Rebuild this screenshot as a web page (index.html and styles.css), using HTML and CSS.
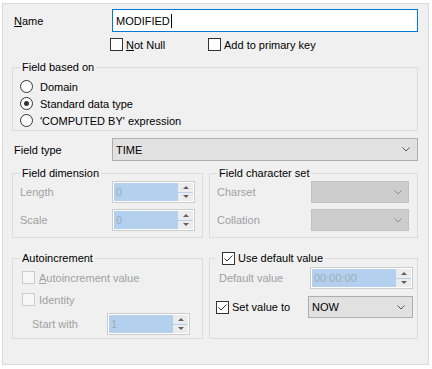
FILE: index.html
```html
<!DOCTYPE html>
<html lang="en">
<head>
  <meta charset="UTF-8">
  <title>Field</title>
  <link rel="stylesheet" href="styles.css">
</head>
<body>
  <div class="panel">
    <div class="name_row">
      <label class="lbl"><u>N</u>ame</label>
      <div class="edit">MODIFIED<span class="caret"></span></div>
    </div>

    <div class="check_row">
      <span class="chk first"><span class="box"></span><span><u>N</u>ot Null</span></span>
      <span class="chk"><span class="box"></span><span>Add to primary key</span></span>
    </div>

    <fieldset class="group based">
      <legend>Field based on</legend>
      <div class="radio"><span class="circle"></span>Domain</div>
      <div class="radio"><span class="circle on"><span class="dot"></span></span>Standard data type</div>
      <div class="radio"><span class="circle"></span>'COMPUTED BY' expression</div>
    </fieldset>

    <div class="type_row">
      <label class="lbl">Field type</label>
      <div class="combo wide">TIME
        <svg class="chev" width="8" height="5" viewBox="0 0 8 5"><path d="M0.5 0.5 L4 4 L7.5 0.5" fill="none" stroke="#555" stroke-width="1"/></svg>
      </div>
    </div>

    <div class="pair dims">
      <fieldset class="group dim">
        <legend>Field dimension</legend>
        <div class="frow">
          <span class="lbl_off w92">Length</span>
          <div class="spin w83"><span class="val">0</span><span class="btns"><span class="up"></span><span class="dn"></span></span></div>
        </div>
        <div class="frow">
          <span class="lbl_off w92">Scale</span>
          <div class="spin w83"><span class="val">0</span><span class="btns"><span class="up"></span><span class="dn"></span></span></div>
        </div>
      </fieldset>
      <fieldset class="group charset">
        <legend>Field character set</legend>
        <div class="frow">
          <span class="lbl_off w94">Charset</span>
          <div class="combo off w98">
            <svg class="chev" width="8" height="5" viewBox="0 0 8 5"><path d="M0.5 0.5 L4 4 L7.5 0.5" fill="none" stroke="#8c8c8c" stroke-width="1"/></svg>
          </div>
        </div>
        <div class="frow">
          <span class="lbl_off w94">Collation</span>
          <div class="combo off w98">
            <svg class="chev" width="8" height="5" viewBox="0 0 8 5"><path d="M0.5 0.5 L4 4 L7.5 0.5" fill="none" stroke="#8c8c8c" stroke-width="1"/></svg>
          </div>
        </div>
      </fieldset>
    </div>

    <div class="pair bottom">
      <fieldset class="group auto">
        <legend>Autoincrement</legend>
        <div class="crow"><span class="box off"></span><span class="txt_off"><u>A</u>utoincrement value</span></div>
        <div class="crow second"><span class="box off"></span><span class="txt_off">Identity</span></div>
        <div class="frow start">
          <span class="lbl_off w87">Start with</span>
          <div class="spin w83"><span class="val">1</span><span class="btns"><span class="up"></span><span class="dn"></span></span></div>
        </div>
      </fieldset>
      <fieldset class="group defval">
        <legend>
          <span class="chk"><span class="box"><svg width="11" height="11" viewBox="0 0 11 11"><path d="M1.5 5.5 L4 8 L9.5 2.5" fill="none" stroke="#333" stroke-width="1"/></svg></span><span>Use default value</span></span>
        </legend>
        <div class="frow">
          <span class="lbl_off w94 ind">Default value</span>
          <div class="spin w103"><span class="val">00:00:00</span><span class="btns"><span class="up"></span><span class="dn"></span></span></div>
        </div>
        <div class="frow setrow">
          <span class="chk w92"><span class="box"><svg width="11" height="11" viewBox="0 0 11 11"><path d="M1.5 5.5 L4 8 L9.5 2.5" fill="none" stroke="#333" stroke-width="1"/></svg></span><span>Set value to</span></span>
          <div class="combo w105">NOW
            <svg class="chev" width="8" height="5" viewBox="0 0 8 5"><path d="M0.5 0.5 L4 4 L7.5 0.5" fill="none" stroke="#555" stroke-width="1"/></svg>
          </div>
        </div>
      </fieldset>
    </div>
  </div>
</body>
</html>
```

FILE: styles.css
```css
* {
  box-sizing: border-box;
}

body {
  margin: 0;
  background: #fff;
  color: #000;
  font-family: "Liberation Sans", Arial, sans-serif;
  font-size: 11px;
  line-height: 14px;
}

.panel {
  width: 427px;
  height: 362px;
  margin: 3px 0 0 2px;
  padding: 5px 10px 0 9px;
  border: 1px solid #d9d9d9;
  background: #f0f0f0;
}

u {
  text-decoration: underline;
  text-underline-offset: 1px;
}

/* name */
.name_row,
.type_row {
  display: flex;
  align-items: center;
  height: 23px;
}

.type_row {
  margin-top: 7px;
}

.lbl {
  width: 100px;
  padding-left: 2px;
}

.edit {
  display: flex;
  align-items: center;
  width: 306px;
  height: 23px;
  padding-left: 3px;
  border: 1px solid #0078d7;
  background: #fff;
}

.caret {
  width: 1px;
  height: 14px;
  margin-left: 1px;
  background: #000;
}

/* checks */
.check_row {
  display: flex;
  height: 13px;
  margin-top: 6px;
  padding-left: 98px;
}

.chk {
  display: flex;
  align-items: center;
  gap: 3px;
}

.chk.first {
  width: 98px;
}

.box {
  display: flex;
  align-items: center;
  justify-content: center;
  flex: none;
  width: 13px;
  height: 13px;
  border: 1px solid #333;
  background: #fff;
}

.box.off {
  border-color: #cccccc;
  background: #f7f7f7;
}

/* groups */
.group {
  min-width: 0;
  margin: 0;
  border: 1px solid #dcdcdc;
}

.group legend {
  height: 14px;
  padding: 0 2px;
  line-height: 14px;
}

.based {
  margin-top: 9px;
  padding: 4px 7px 1px;
}

.radio {
  display: flex;
  align-items: center;
  gap: 7px;
  height: 17px;
}

.circle {
  display: flex;
  align-items: center;
  justify-content: center;
  width: 13px;
  height: 13px;
  border: 1px solid #333;
  border-radius: 50%;
  background: #fff;
}

.dot {
  width: 5px;
  height: 5px;
  border-radius: 50%;
  background: #333;
}

.pair {
  display: flex;
  gap: 6px;
}

.dims {
  margin-top: 5px;
}

.bottom {
  margin-top: 13px;
}

.dim,
.auto {
  width: 191px;
}

.charset,
.defval {
  width: 209px;
}

.dim {
  padding: 1px 7px 6px;
}

.charset {
  padding: 1px 8px 6px 7px;
}

.frow {
  display: flex;
  align-items: center;
  height: 22px;
}

.frow + .frow {
  margin-top: 6px;
}

.lbl_off {
  color: #a0a0a0;
}

.ind {
  padding-left: 3px;
}

.w83 { width: 83px; }
.w87 { width: 87px; }
.w92 { width: 92px; }
.w94 { width: 94px; }
.w98 { width: 98px; }
.w103 { width: 103px; }
.w105 { width: 105px; }

/* spin edit */
.spin {
  display: flex;
  height: 22px;
  padding: 1px;
  border: 1px solid #cccccc;
  background: #fff;
}

.spin .val {
  flex: 1;
  padding-left: 2px;
  background: #b3d1ef;
  color: #9fabb8;
  line-height: 19px;
}

.spin .btns {
  display: flex;
  flex-direction: column;
  gap: 1px;
  width: 16px;
  padding-left: 1px;
  background: #b3d1ef;
}

.spin .up,
.spin .dn {
  display: flex;
  flex: 1;
  align-items: center;
  justify-content: center;
  background: #ececec;
}

.spin .up::after {
  content: "";
  border: 3px solid transparent;
  border-top: 0;
  border-bottom: 3px solid #606060;
}

.spin .dn::after {
  content: "";
  border: 3px solid transparent;
  border-bottom: 0;
  border-top: 3px solid #606060;
}

/* combo */
.combo {
  display: flex;
  align-items: center;
  justify-content: space-between;
  height: 22px;
  padding: 0 7px 0 3px;
  border: 1px solid #adadad;
  background: #e1e1e1;
}

.combo.wide {
  width: 306px;
  height: 23px;
}

.combo.off {
  justify-content: flex-end;
  padding-right: 6px;
  border-color: #c2c2c2;
  background: #cccccc;
}

/* autoincrement */
.auto {
  padding: 6px 7px 3px;
}

.crow {
  display: flex;
  align-items: center;
  gap: 4px;
  height: 13px;
  padding-left: 2px;
}

.crow.second {
  margin-top: 9px;
}

.txt_off {
  color: #a0a0a0;
}

.frow.start {
  margin-top: 7px;
  padding-left: 12px;
}

.frow.start .w87 {
  width: 75px;
}

/* default value */
.defval {
  padding: 2px 4px 20px 6px;
}

.defval legend .chk {
  height: 14px;
  margin-left: 4px;
}

.frow.setrow {
  margin-top: 7px;
}
```
